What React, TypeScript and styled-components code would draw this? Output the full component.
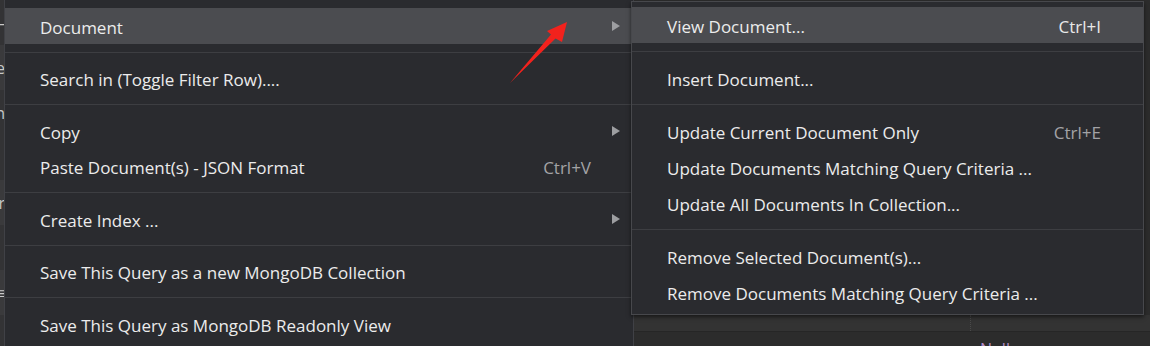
import React from "react";
import styled, { createGlobalStyle } from "styled-components";

const GlobalStyle = createGlobalStyle`
  html, body {
    margin: 0;
    padding: 0;
    background: #2c2c2c;
  }
  body {
    font-family: "Open Sans", "Noto Sans", "Liberation Sans", sans-serif;
  }
`;

const Stage = styled.div`
  position: relative;
  width: 1150px;
  height: 346px;
  overflow: hidden;
  background: #2c2c2c;
`;

/* the app window that sits behind the context menu */
const Backdrop = styled.div`
  display: grid;
  grid-template-columns: 5px 1fr;
  height: 100%;
`;

const SideStrip = styled.div`
  display: flex;
  flex-direction: column;
  background: #333335;
  overflow: hidden;
`;

const StripRow = styled.div<{ $shade?: boolean }>`
  height: 45px;
  display: flex;
  align-items: center;
  justify-content: flex-end;
  background: ${(p) => (p.$shade ? "#3a3a3c" : "transparent")};
  color: #c8c8c8;
  font-size: 16px;
  white-space: nowrap;
`;

const Workspace = styled.div`
  display: flex;
  flex-direction: column;
  background: #2c2c2c;
`;

const Filler = styled.div`
  flex: 0 0 315px;
`;

const GridHeader = styled.div`
  flex: 0 0 16px;
  display: grid;
  grid-template-columns: 966px 1fr;
  background: #333333;
  border-bottom: 1px solid #262626;
`;

const GridCell = styled.div`
  border-right: 1px dotted #4a4a4a;
`;

const GridRow = styled.div`
  display: grid;
  grid-template-columns: 975px 1fr;
  padding-top: 6px;
  font-size: 16px;
  color: #b38cc8;
`;

/* context menus */
const Menu = styled.div<{ $left: number; $top: number; $width: number }>`
  position: absolute;
  left: ${(p) => p.$left}px;
  top: ${(p) => p.$top}px;
  width: ${(p) => p.$width}px;
  background: #2a2b2f;
  border: 1px solid #404146;
  box-sizing: border-box;
  display: flex;
  flex-direction: column;
  color: #ececec;
  font-size: 17px;
`;

const MainMenu = styled(Menu)`
  padding-top: 8px;
  height: 360px;
  border-top: none;
`;

const SubMenu = styled(Menu)`
  padding: 5px 0 4px;
  border-color: #47484c;
  box-shadow: 0 2px 4px rgba(0, 0, 0, 0.55);
`;

const Item = styled.div<{ $active?: boolean; $h: number }>`
  display: grid;
  grid-template-columns: 1fr auto 42px;
  align-items: center;
  height: ${(p) => p.$h}px;
  padding-left: 35px;
  background: ${(p) => (p.$active ? "#4b4c50" : "transparent")};
  white-space: nowrap;
`;

const Label = styled.span`
  line-height: 1;
  padding-top: 3px;
`;

const Shortcut = styled.span<{ $active?: boolean }>`
  color: ${(p) => (p.$active ? "#e8e8e8" : "#a3a3a6")};
  line-height: 1;
  padding-top: 3px;
`;

const Arrow = styled.span`
  justify-self: start;
  margin-left: 21px;
  width: 0;
  height: 0;
  border-left: 8px solid #9d9ea1;
  border-top: 5.5px solid transparent;
  border-bottom: 5.5px solid transparent;
`;

const Separator = styled.div`
  height: 1px;
  margin: 8px 0;
  background: #3d3e42;
`;

const Pointer = styled.svg`
  position: absolute;
  left: 500px;
  top: 15px;
`;

type Entry =
  | { kind: "sep" }
  | { kind: "item"; label: string; shortcut?: string; sub?: boolean; active?: boolean };

const mainEntries: Entry[] = [
  { kind: "item", label: "Document", sub: true, active: true },
  { kind: "sep" },
  { kind: "item", label: "Search in (Toggle Filter Row)...." },
  { kind: "sep" },
  { kind: "item", label: "Copy", sub: true },
  { kind: "item", label: "Paste Document(s) - JSON Format", shortcut: "Ctrl+V" },
  { kind: "sep" },
  { kind: "item", label: "Create Index ...", sub: true },
  { kind: "sep" },
  { kind: "item", label: "Save This Query as a new MongoDB Collection" },
  { kind: "sep" },
  { kind: "item", label: "Save This Query as MongoDB Readonly View" },
];

const subEntries: Entry[] = [
  { kind: "item", label: "View Document...", shortcut: "Ctrl+I", active: true },
  { kind: "sep" },
  { kind: "item", label: "Insert Document..." },
  { kind: "sep" },
  { kind: "item", label: "Update Current Document Only", shortcut: "Ctrl+E" },
  { kind: "item", label: "Update Documents Matching Query Criteria ..." },
  { kind: "item", label: "Update All Documents In Collection..." },
  { kind: "sep" },
  { kind: "item", label: "Remove Selected Document(s)..." },
  { kind: "item", label: "Remove Documents Matching Query Criteria ..." },
];

function MenuEntries({ entries, rowHeight }: { entries: Entry[]; rowHeight: number }) {
  return (
    <>
      {entries.map((e, i) =>
        e.kind === "sep" ? (
          <Separator key={i} />
        ) : (
          <Item key={i} $active={e.active} $h={rowHeight}>
            <Label>{e.label}</Label>
            <Shortcut $active={e.active}>{e.shortcut || ""}</Shortcut>
            {e.sub ? <Arrow /> : <span />}
          </Item>
        )
      )}
    </>
  );
}

export default function App() {
  return (
    <Stage>
      <GlobalStyle />
      <Backdrop>
        <SideStrip>
          <StripRow>—</StripRow>
          <StripRow $shade>e</StripRow>
          <StripRow>n</StripRow>
          <StripRow>&nbsp;</StripRow>
          <StripRow $shade>r</StripRow>
          <StripRow>&nbsp;</StripRow>
          <StripRow $shade>≡</StripRow>
        </SideStrip>
        <Workspace>
          <Filler />
          <GridHeader>
            <GridCell />
            <div />
          </GridHeader>
          <GridRow>
            <div />
            <div>Null</div>
          </GridRow>
        </Workspace>
      </Backdrop>

      <MainMenu $left={4} $top={0} $width={630}>
        <MenuEntries entries={mainEntries} rowHeight={35.5} />
      </MainMenu>

      <SubMenu $left={631} $top={1} $width={513}>
        <MenuEntries entries={subEntries} rowHeight={36} />
      </SubMenu>

      <Pointer width="80" height="75" viewBox="500 15 80 75">
        <polygon
          points="510,83 551,34.5 547,31 567,22 562,42 555.5,38.5"
          fill="#f2221d"
        />
      </Pointer>
    </Stage>
  );
}
